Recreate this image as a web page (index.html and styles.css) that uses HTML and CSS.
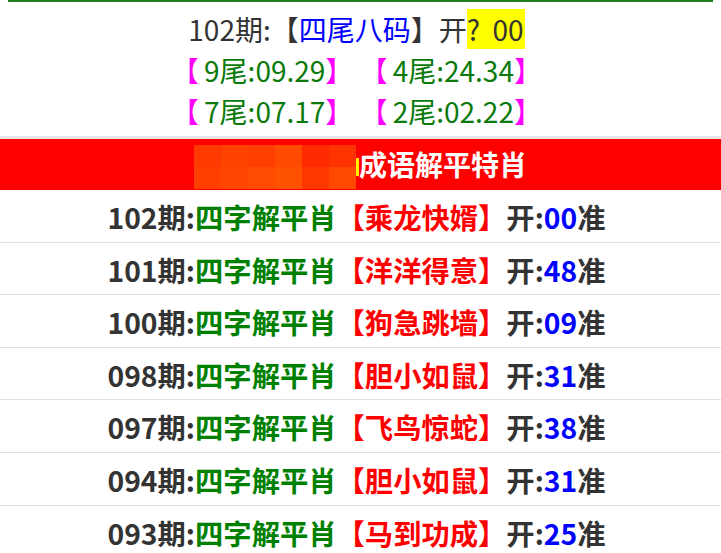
FILE: index.html
```html
<!DOCTYPE html>
<html lang="zh-CN">
<head>
<meta charset="utf-8">
<title>成语解平特肖</title>
<link rel="stylesheet" href="styles.css">
</head>
<body>
<div class="topline"></div>
<div class="tail">
  <p class="tail-title">102期:【<span class="blue">四尾八码</span>】开<span class="hl">?  00</span></p>
  <p class="tail-line"><span class="bo">【</span>9尾:09.29<span class="bc">】</span> <span class="bo">【</span>4尾:24.34<span class="bc">】</span></p>
  <p class="tail-line"><span class="bo">【</span>7尾:07.17<span class="bc">】</span> <span class="bo">【</span>2尾:02.22<span class="bc">】</span></p>
</div>
<div class="sep"></div>
<div class="header">
  <span class="mosaic" aria-hidden="true">
    <i class="m1"></i><i class="m2"></i><i class="m3"></i><i class="m4"></i><i class="m5"></i><i class="m6"></i>
    <i class="m7"></i><i class="m8"></i><i class="m9"></i><i class="m10"></i><i class="m11"></i><i class="m12"></i>
  </span><span class="sliver"></span><span class="htext">成语解平特肖</span>
</div>
<ul class="rows">
  <li>102期:<span class="g">四字解平肖</span><span class="r">【乘龙快婿】</span>开:<span class="b">00</span>准</li>
  <li>101期:<span class="g">四字解平肖</span><span class="r">【洋洋得意】</span>开:<span class="b">48</span>准</li>
  <li>100期:<span class="g">四字解平肖</span><span class="r">【狗急跳墙】</span>开:<span class="b">09</span>准</li>
  <li>098期:<span class="g">四字解平肖</span><span class="r">【胆小如鼠】</span>开:<span class="b">31</span>准</li>
  <li>097期:<span class="g">四字解平肖</span><span class="r">【飞鸟惊蛇】</span>开:<span class="b">38</span>准</li>
  <li>094期:<span class="g">四字解平肖</span><span class="r">【胆小如鼠】</span>开:<span class="b">31</span>准</li>
  <li>093期:<span class="g">四字解平肖</span><span class="r">【马到功成】</span>开:<span class="b">25</span>准</li>
</ul>
</body>
</html>
```

FILE: styles.css
```css
* { box-sizing: border-box; }
html, body {
  margin: 0;
  padding: 0;
  background: #fff;
  font-family: "Noto Sans CJK SC", "Noto Sans", sans-serif;
  color: #333;
}
.topline {
  height: 2px;
  margin: 0 8px;
  background: #1f7f1f;
}
.tail {
  text-align: center;
  padding: 7px 8px 4px 0;
}
.tail p {
  margin: 0;
  font-size: 28px;
  line-height: 41px;
  white-space: pre;
}
.tail-title { color: #333; }
.blue { color: #0000ff; }
.hl { background: #ffff00; color: #333; padding-right: 1px; }
.tail-line { color: #0a7a0a; }
.bo { color: #ff00ff; margin-right: 5px; }
.bc { color: #ff00ff; }
.sep {
  height: 3px;
  background: #e6e6e6;
}
.header {
  height: 51px;
  background: #ff0000;
  display: flex;
  justify-content: center;
  align-items: center;
}
.mosaic {
  display: grid;
  grid-template-columns: repeat(6, 27px);
  grid-template-rows: 22px 22px;
  margin-top: 5px;
}
.mosaic i { display: block; }
.m1 { background: #ff3a00; }
.m2 { background: #ff4200; }
.m3 { background: #ff3f00; }
.m4 { background: #ff4a00; }
.m5 { background: #ff2a00; }
.m6 { background: #ff3300; }
.m7 { background: #ff3e00; }
.m8 { background: #ff4600; }
.m9 { background: #ff4c00; }
.m10 { background: #ff5200; }
.m11 { background: #ff3800; }
.m12 { background: #ff4800; }
.sliver {
  width: 3px;
  height: 18px;
  background: #ffee00;
  margin-top: 4px;
}
.htext {
  color: #fff;
  font-weight: bold;
  font-size: 28px;
  line-height: 51px;
}
.rows {
  list-style: none;
  margin: 0;
  padding: 0;
}
.rows li {
  text-align: center;
  font-size: 28.3px;
  font-weight: bold;
  line-height: 51.6px;
  padding: 1px 8px 0 0;
  height: 52.6px;
  border-bottom: 1px solid #e0e0e0;
  color: #333;
  white-space: nowrap;
}
.g { color: #008000; }
.r { color: #ff0000; }
.b { color: #0000ff; }
```
